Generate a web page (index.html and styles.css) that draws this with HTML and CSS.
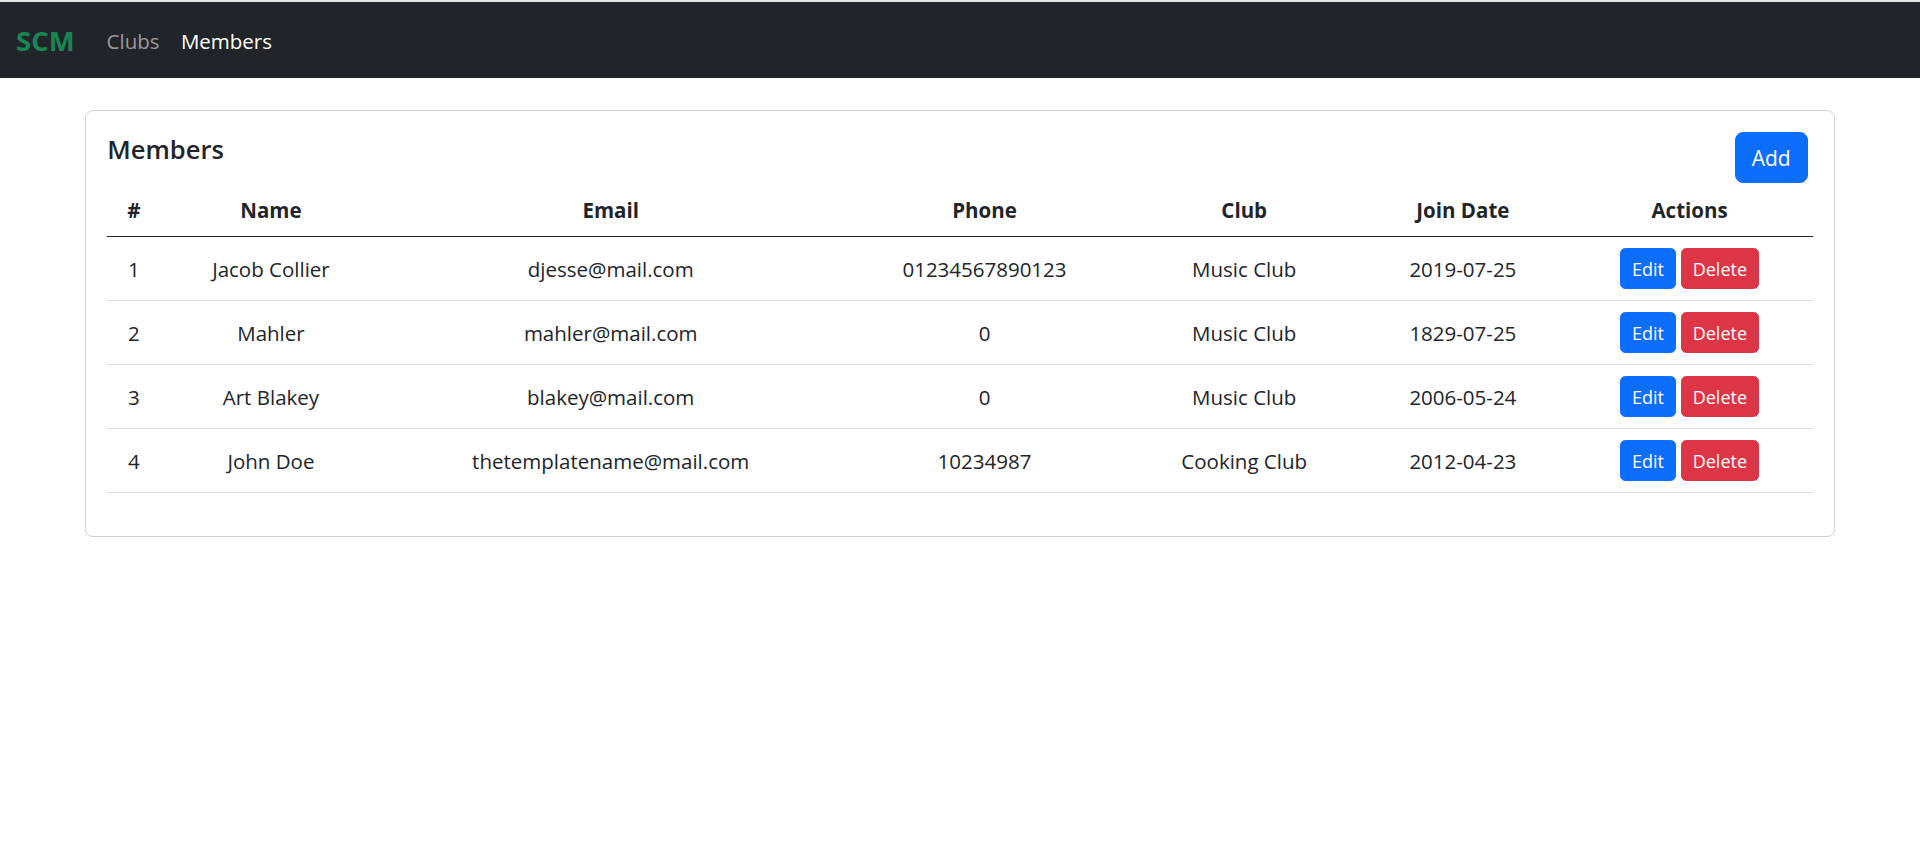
FILE: index.html
```html
<!DOCTYPE html>
<html lang="en">
<head>
<meta charset="utf-8">
<title>SCM - Members</title>
<link rel="stylesheet" href="styles.css">
</head>
<body>
<div class="top-strip"></div>
<nav class="navbar">
  <a class="brand" href="#">SCM</a>
  <ul class="nav-links">
    <li><a class="nav-link" href="#">Clubs</a></li>
    <li><a class="nav-link active" href="#">Members</a></li>
  </ul>
</nav>
<main class="container">
  <section class="card">
    <div class="card-head">
      <h5 class="card-title">Members</h5>
      <button class="btn btn-primary btn-add">Add</button>
    </div>
    <table class="table">
      <colgroup>
        <col class="c1"><col class="c2"><col class="c3"><col class="c4"><col class="c5"><col class="c6"><col class="c7">
      </colgroup>
      <thead>
        <tr><th>#</th><th>Name</th><th>Email</th><th>Phone</th><th>Club</th><th>Join Date</th><th>Actions</th></tr>
      </thead>
      <tbody>
        <tr><td>1</td><td>Jacob Collier</td><td>djesse@mail.com</td><td>01234567890123</td><td>Music Club</td><td>2019-07-25</td><td><button class="btn btn-sm btn-primary">Edit</button> <button class="btn btn-sm btn-danger">Delete</button></td></tr>
        <tr><td>2</td><td>Mahler</td><td>mahler@mail.com</td><td>0</td><td>Music Club</td><td>1829-07-25</td><td><button class="btn btn-sm btn-primary">Edit</button> <button class="btn btn-sm btn-danger">Delete</button></td></tr>
        <tr><td>3</td><td>Art Blakey</td><td>blakey@mail.com</td><td>0</td><td>Music Club</td><td>2006-05-24</td><td><button class="btn btn-sm btn-primary">Edit</button> <button class="btn btn-sm btn-danger">Delete</button></td></tr>
        <tr><td>4</td><td>John Doe</td><td>thetemplatename@mail.com</td><td>10234987</td><td>Cooking Club</td><td>2012-04-23</td><td><button class="btn btn-sm btn-primary">Edit</button> <button class="btn btn-sm btn-danger">Delete</button></td></tr>
      </tbody>
    </table>
  </section>
</main>
</body>
</html>
```
FILE: styles.css
```css
* { box-sizing: border-box; }
html, body { margin: 0; padding: 0; }
body {
  font-family: "Open Sans", "Noto Sans", "Liberation Sans", sans-serif;
  font-size: 20.5px;
  line-height: 1.5;
  color: #212529;
  background: #fff;
}
.top-strip { height: 2px; background: #e4e4e4; }
.navbar {
  height: 76px;
  background: #212529;
  display: flex;
  align-items: center;
  padding: 0 16px;
}
.brand {
  color: #198754;
  font-weight: 700;
  font-size: 27.5px;
  line-height: 40px;
  text-decoration: none;
  margin-right: 21.333px;
  padding-top: 2px;
}
.nav-links { list-style: none; margin: 0; padding: 0; display: flex; }
.nav-link {
  display: block;
  padding: 1px 10.667px 0;
  color: rgba(255,255,255,.55);
  text-decoration: none;
  line-height: 32px;
}
.nav-link.active { color: #fff; }
.container { padding: 32px 85px 0; }
.card {
  border: 1.333px solid rgba(0,0,0,.175);
  border-radius: 8px;
  padding: 21.333px;
}
.card-head {
  display: flex;
  justify-content: space-between;
  align-items: flex-start;
}
.card-title {
  margin: 0;
  font-size: 25.5px;
  font-weight: 600;
  line-height: 34px;
}
.btn {
  font-family: inherit;
  color: #fff;
  border: 1.333px solid transparent;
  border-radius: 8px;
  font-size: 21px;
  line-height: 32px;
  padding: 8px 16px;
  cursor: pointer;
  display: inline-block;
  vertical-align: middle;
}
.btn-add { margin-right: 5px; height: 50.667px; }
.btn-primary { background: #0d6efd; border-color: #0d6efd; }
.btn-danger { background: #dc3545; border-color: #dc3545; }
.btn-sm {
  font-size: 18px;
  line-height: 28px;
  height: 41.333px;
  padding: 5.333px 10.667px;
  border-radius: 5.333px;
}
.table {
  width: 100%;
  table-layout: fixed;
  border-collapse: separate;
  border-spacing: 0;
  margin-bottom: 21.333px;
  text-align: center;
}
.c1 { width: 53px; }
.c2 { width: 221px; }
.c3 { width: 458px; }
.c4 { width: 289px; }
.c5 { width: 230px; }
.c6 { width: 207px; }
.c7 { width: 246px; }
.table th, .table td {
  padding: 10.667px;
  vertical-align: middle;
  line-height: 32px;
}
.table th {
  font-weight: 700;
  border-bottom: 1.333px solid #212529;
}
.table td {
  height: 64px;
  border-bottom: 1.333px solid #dee2e6;
  white-space: nowrap;
}
```
